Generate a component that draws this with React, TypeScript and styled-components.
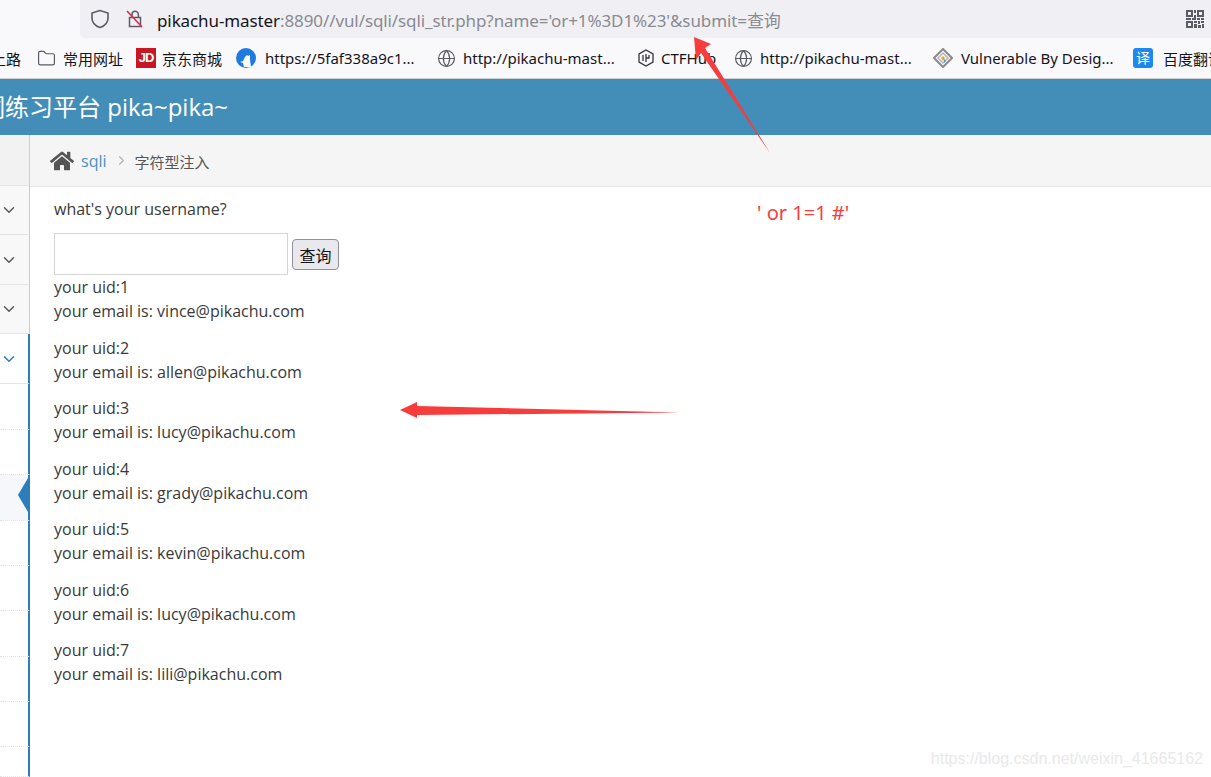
import React from "react";
import styled, { createGlobalStyle } from "styled-components";
import { FaHome } from "react-icons/fa";
import { ChevronDown, ChevronRight, Folder, Globe } from "lucide-react";

const Global = createGlobalStyle`
  html, body { margin: 0; padding: 0; background: #fff; }
  body { font-family: "Open Sans", "Noto Sans CJK SC", sans-serif; overflow: hidden; }
  * { box-sizing: border-box; }
`;
const Page = styled.div`position: relative; width: 1211px; height: 777px; overflow: hidden; display: flex; flex-direction: column;`;
const Chrome = styled.div`height: 79px; background: #f9f9fb; border-bottom: 1px solid #cfcfd0; display: flex; flex-direction: column;`;
const UrlRow = styled.div`height: 38px; margin-left: 80px; padding: 0 7px 0 10px; background: #f0f0f4; border-bottom-left-radius: 5px; display: flex; align-items: center;`;
const UrlIcons = styled.div`display: flex; align-items: center; gap: 15px; margin-right: 12px;`;
const Url = styled.div`flex: 1; font-size: 17px; color: #8a8a90; white-space: nowrap; font-family: "Noto Sans", "Noto Sans CJK SC", sans-serif; letter-spacing: -0.1px;`;
const Host = styled.span`color: #15141a;`;
const BookmarkBar = styled.div`height: 40px; display: flex; align-items: center; margin-left: -9px; color: #15141a; font-size: 15px; white-space: nowrap; font-family: "Noto Sans", "Noto Sans CJK SC", sans-serif;`;
const Bookmark = styled.div<{ $w: number; $gap?: number }>`width: ${p => p.$w}px; flex: none; display: flex; align-items: center; gap: ${p => p.$gap ?? 7}px;`;
const JdLogo = styled.span`width: 20px; height: 20px; background: #c91623; color: #fff; font-size: 13px; line-height: 20px; text-align: center; font-weight: 700; letter-spacing: -1px; font-family: "Liberation Sans", sans-serif;`;
const YiLogo = styled.span`width: 20px; height: 20px; border-radius: 3px; background: #1e88f0; color: #fff; font-size: 14px; line-height: 20px; text-align: center;`;
const Header = styled.header`height: 56px; background: #438eb9; color: #fff; font-size: 24px; line-height: 56px; white-space: nowrap; padding-left: 0; text-indent: -19px; font-family: "Open Sans", "Noto Sans CJK SC", sans-serif;`;
const Body = styled.div`flex: 1; display: flex; min-height: 0;`;
const Sidebar = styled.nav`width: 30px; flex: none; display: flex; flex-direction: column; background: #fff;`;
const Spacer = styled.div`height: 51px; background: #f2f2f2; border-right: 1px solid #ccc; border-bottom: 1px solid #e5e5e5;`;
const NavRow = styled.div<{ $open?: boolean; $h: number }>`
  height: ${p => p.$h}px; background: ${p => p.$open ? "#fff" : "#f8f8f8"};
  border-bottom: 1px solid #e5e5e5; border-right: ${p => p.$open ? "2px solid #2b7dbc" : "1px solid #ccc"};
  color: ${p => p.$open ? "#2b7dbc" : "#585858"};
  display: flex; align-items: center; padding-left: 0;
`;
const SubRow = styled.div<{ $h: number; $active?: boolean }>`
  position: relative; height: ${p => p.$h}px; background: ${p => p.$active ? "#f5f7fa" : "#fff"};
  border-right: 2px solid #2b7dbc; border-bottom: 1px dotted #e4e4e4;
`;
const ActiveMark = styled.span`position: absolute; right: 0; top: 3px; width: 10px; height: 34px; background: #2b7dbc; clip-path: polygon(100% 0, 0 50%, 100% 100%);`;
const Main = styled.main`flex: 1; min-width: 0;`;
const Breadcrumb = styled.div`height: 52px; background: #f5f5f5; border-bottom: 1px solid #e5e5e5; display: flex; align-items: center; padding-left: 20px; font-size: 16px; color: #555;`;
const Crumb = styled.span`color: #4c8fbd; margin-left: 7px;`;
const Current = styled.span`font-size: 15px; color: #555; margin-left: 6px; margin-top: 1px;`;
const Content = styled.div`padding: 10px 0 0 24px; color: #393939; font-size: 16px; line-height: 24px;`;
const Question = styled.p`margin: 0 0 12px;`;
const Form = styled.form`display: flex; align-items: flex-end; gap: 4px; margin-bottom: 0;`;
const Input = styled.input`width: 234px; height: 42px; border: 1px solid #d5d5d5; background: #fff; padding: 0;`;
const Submit = styled.button`width: 47px; height: 31px; margin-bottom: 5px; padding: 0; border: 1px solid #8f8f9d; border-radius: 4px; background: #e9e9ed; color: #15141a; font-size: 16px; font-family: "Noto Sans CJK SC", sans-serif;`;
const Result = styled.p`margin: 0 0 12.5px; color: #393939;`;
const Annotation = styled.svg`position: absolute; left: 0; top: 0; pointer-events: none;`;
const Note = styled.div`position: absolute; left: 757px; top: 199px; color: #f73c3c; font-size: 20px; line-height: 28px; font-family: "Noto Sans", sans-serif; white-space: nowrap;`;
const Watermark = styled.div`position: absolute; right: 8px; top: 749px; color: #e9e9e9; font-size: 16px; line-height: 20px; font-family: "Liberation Sans", sans-serif;`;

const Shield = () => (
  <svg width="20" height="20" viewBox="0 0 20 20" fill="none" stroke="#5b5b66" strokeWidth="1.6"><path d="M10 1.5 2 4v5c0 5 3.5 8 8 9.5 4.500-1.500 8-4.500 8-9.500V4z" /></svg>
);
const Lock = () => (
  <svg width="20" height="20" viewBox="0 0 20 20" fill="none"><path d="M7 8V5.500a3.200 3.200 0 0 1 6.400 0V8M4.500 8.500h11v9h-11z" stroke="#5b5b66" strokeWidth="1.500" /><path d="M2 2l15 16" stroke="#e22850" strokeWidth="1.700" /></svg>
);
const Qr = () => (
  <svg width="18" height="18" viewBox="0 0 18 18" fill="#5b5b66"><path d="M0 0h7v7H0zM2 2v3h3V2zM11 0h7v7h-7zM13 2v3h3V2zM0 11h7v7H0zM2 13v3h3v-3zM8 0h2v3H8zM8 5h2v5H8zM0 8h5v2H0zM6 8h2v2H6zM11 8h3v2h-3zM15 8h3v2h-3zM8 11h3v2H8zM12 11h2v3h-2zM15 11h3v2h-3zM8 14h3v4H8zM12 15h3v3h-3zM16 14h2v4h-2z" fillRule="evenodd" /></svg>
);
const CatLogo = () => (
  <svg width="20" height="20" viewBox="0 0 20 20"><circle cx="10" cy="10" r="10" fill="#1f7ae0" /><path d="M9 9l2-2 1 1 2-1v5l1 7H8l-1-4-3-1 3-1z" fill="#fff" /></svg>
);
const HexLogo = () => (
  <svg width="16" height="18" viewBox="0 0 16 18" fill="none" stroke="#33333b" strokeWidth="1.300"><path d="M8 1l7 4v8l-7 4-7-4V5z" /><path d="M5 6v6M8 5v8M11 6v3H8" /></svg>
);
const DiamondLogo = () => (
  <svg width="20" height="20" viewBox="0 0 20 20" fill="none"><path d="M10 1l9 9-9 9-9-9z" stroke="#8a8a8a" strokeWidth="2" /><path d="M10 5l5 5-5 5-5-5z" stroke="#b5b5b5" strokeWidth="1.500" /><path d="M10 8l2 2-2 3-2-3z" fill="#e8a33c" /><path d="M11 11l2 2-2 2z" fill="#3d9be0" /></svg>
);

const results = [
  ["1", "vince"], ["2", "allen"], ["3", "lucy"], ["4", "grady"], ["5", "kevin"], ["6", "lucy"], ["7", "lili"],
];
const subs = [46, 45, 46, 45, 45, 46, 45, 45];

export default function App() {
  return (
    <Page>
      <Global />
      <Chrome>
        <UrlRow>
          <UrlIcons><Shield /><Lock /></UrlIcons>
          <Url><Host>pikachu-master</Host>:8890//vul/sqli/sqli_str.php?name='or+1%3D1%23'&amp;submit=查询</Url>
          <Qr />
        </UrlRow>
        <BookmarkBar>
          <Bookmark $w={46}>上路</Bookmark>
          <Bookmark $w={99}><Folder size={19} strokeWidth={1.5} color="#5b5b66" />常用网址</Bookmark>
          <Bookmark $w={100} $gap={6}><JdLogo>JD</JdLogo>京东商城</Bookmark>
          <Bookmark $w={201} $gap={9}><CatLogo />https://5faf338a9c1...</Bookmark>
          <Bookmark $w={201}><Globe size={19} strokeWidth={1.5} color="#5b5b66" />http://pikachu-mast...</Bookmark>
          <Bookmark $w={96}><HexLogo />CTFHub</Bookmark>
          <Bookmark $w={199}><Globe size={19} strokeWidth={1.5} color="#5b5b66" />http://pikachu-mast...</Bookmark>
          <Bookmark $w={200} $gap={8}><DiamondLogo />Vulnerable By Desig...</Bookmark>
          <Bookmark $w={100} $gap={10}><YiLogo>译</YiLogo>百度翻译</Bookmark>
        </BookmarkBar>
      </Chrome>
      <Header>洞练习平台 pika~pika~</Header>
      <Body>
        <Sidebar>
          <Spacer />
          <NavRow $h={49}><ChevronDown size={18} /></NavRow>
          <NavRow $h={50}><ChevronDown size={18} /></NavRow>
          <NavRow $h={49}><ChevronDown size={18} /></NavRow>
          <NavRow $h={50} $open><ChevronDown size={18} /></NavRow>
          {subs.map((h, i) => (
            <SubRow key={i} $h={h} $active={i === 2}>{i === 2 && <ActiveMark />}</SubRow>
          ))}
          <SubRow $h={30} />
        </Sidebar>
        <Main>
          <Breadcrumb>
            <FaHome size={24} color="#555" />
            <Crumb>sqli</Crumb>
            <ChevronRight size={15} color="#b2b6bf" style={{ marginLeft: 7 }} />
            <Current>字符型注入</Current>
          </Breadcrumb>
          <Content>
            <Question>what's your username?</Question>
            <Form onSubmit={e => e.preventDefault()}>
              <Input />
              <Submit type="button">查询</Submit>
            </Form>
            {results.map(([id, name]) => (
              <Result key={id}>your uid:{id}<br />your email is: {name}@pikachu.com</Result>
            ))}
          </Content>
        </Main>
      </Body>
      <Annotation width="1211" height="777" viewBox="0 0 1211 777">
        <path d="M694 37 L711 44 L705 48 L770 153 L701 53 L696 60 Z" fill="#f73c3c" />
        <path d="M400 410 L417 402 L417 406 L680 412.500 L417 415 L417 418 Z" fill="#f73c3c" />
      </Annotation>
      <Note>' or 1=1 #'</Note>
      <Watermark>https://blog.csdn.net/weixin_41665162</Watermark>
    </Page>
  );
}
